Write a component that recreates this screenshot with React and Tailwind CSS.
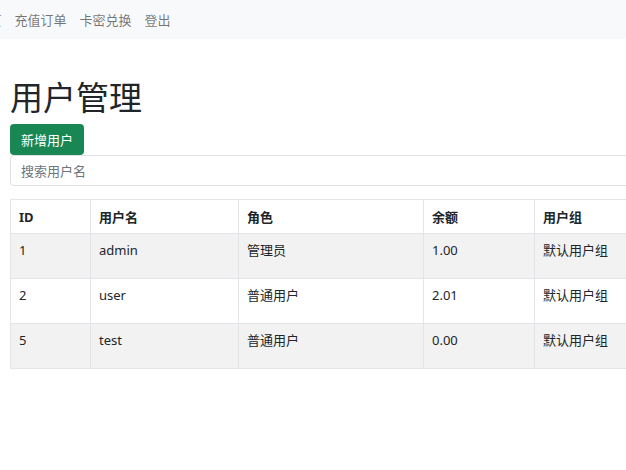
import React from 'react';

const users = [
  { id: 1, name: 'admin', role: '管理员', balance: '1.00', group: '默认用户组' },
  { id: 2, name: 'user', role: '普通用户', balance: '2.01', group: '默认用户组' },
  { id: 5, name: 'test', role: '普通用户', balance: '0.00', group: '默认用户组' },
];

const navLinks = ['首页', '充值订单', '卡密兑换', '登出'];

export default function App() {
  return (
    <div
      className="w-full h-[470px] overflow-hidden bg-white text-[#212529]"
      style={{ fontFamily: '"Noto Sans", "Noto Sans CJK SC", sans-serif' }}
    >
      <nav className="h-[39px] bg-[#f8f9fa] flex items-center">
        <ul className="flex ml-[-31px] text-[13px] text-[rgba(0,0,0,0.55)]">
          {navLinks.map((link) => (
            <li key={link} className="px-[6.5px] leading-[18px]">
              {link}
            </li>
          ))}
        </ul>
      </nav>

      <div className="pl-[10px] w-[900px]">
        <h1 className="mt-[38px] mb-[6px] text-[33px] leading-[41px] font-normal">用户管理</h1>

        <button className="h-[31px] px-[11px] rounded-[4px] bg-[#198754] text-white text-[13px] leading-[18px]">
          新增用户
        </button>

        <input
          type="text"
          placeholder="搜索用户名"
          className="block w-full h-[31px] px-[10px] border border-[#dee2e6] rounded-[4px] text-[13px] placeholder:text-[#6c757d] outline-none"
        />

        <table className="mt-[13px] w-full border-collapse text-[13px] leading-[18px]">
          <thead>
            <tr className="h-[34px]">
              <th className="w-[80px] border border-[#e3e5e8] px-[8px] text-left font-bold">ID</th>
              <th className="w-[148px] border border-[#e3e5e8] px-[8px] text-left font-bold">用户名</th>
              <th className="w-[185px] border border-[#e3e5e8] px-[8px] text-left font-bold">角色</th>
              <th className="w-[111px] border border-[#e3e5e8] px-[8px] text-left font-bold">余额</th>
              <th className="border border-[#e3e5e8] px-[8px] text-left font-bold">用户组</th>
            </tr>
          </thead>
          <tbody>
            {users.map((u, i) => (
              <tr key={u.id} className={`h-[45px] ${i % 2 === 0 ? 'bg-[#f2f2f2]' : 'bg-white'}`}>
                <td className="border border-[#e3e5e8] px-[8px] pt-[7px] align-top">{u.id}</td>
                <td className="border border-[#e3e5e8] px-[8px] pt-[7px] align-top">{u.name}</td>
                <td className="border border-[#e3e5e8] px-[8px] pt-[7px] align-top">{u.role}</td>
                <td className="border border-[#e3e5e8] px-[8px] pt-[7px] align-top">{u.balance}</td>
                <td className="border border-[#e3e5e8] px-[8px] pt-[7px] align-top">{u.group}</td>
              </tr>
            ))}
          </tbody>
        </table>
      </div>
    </div>
  );
}
